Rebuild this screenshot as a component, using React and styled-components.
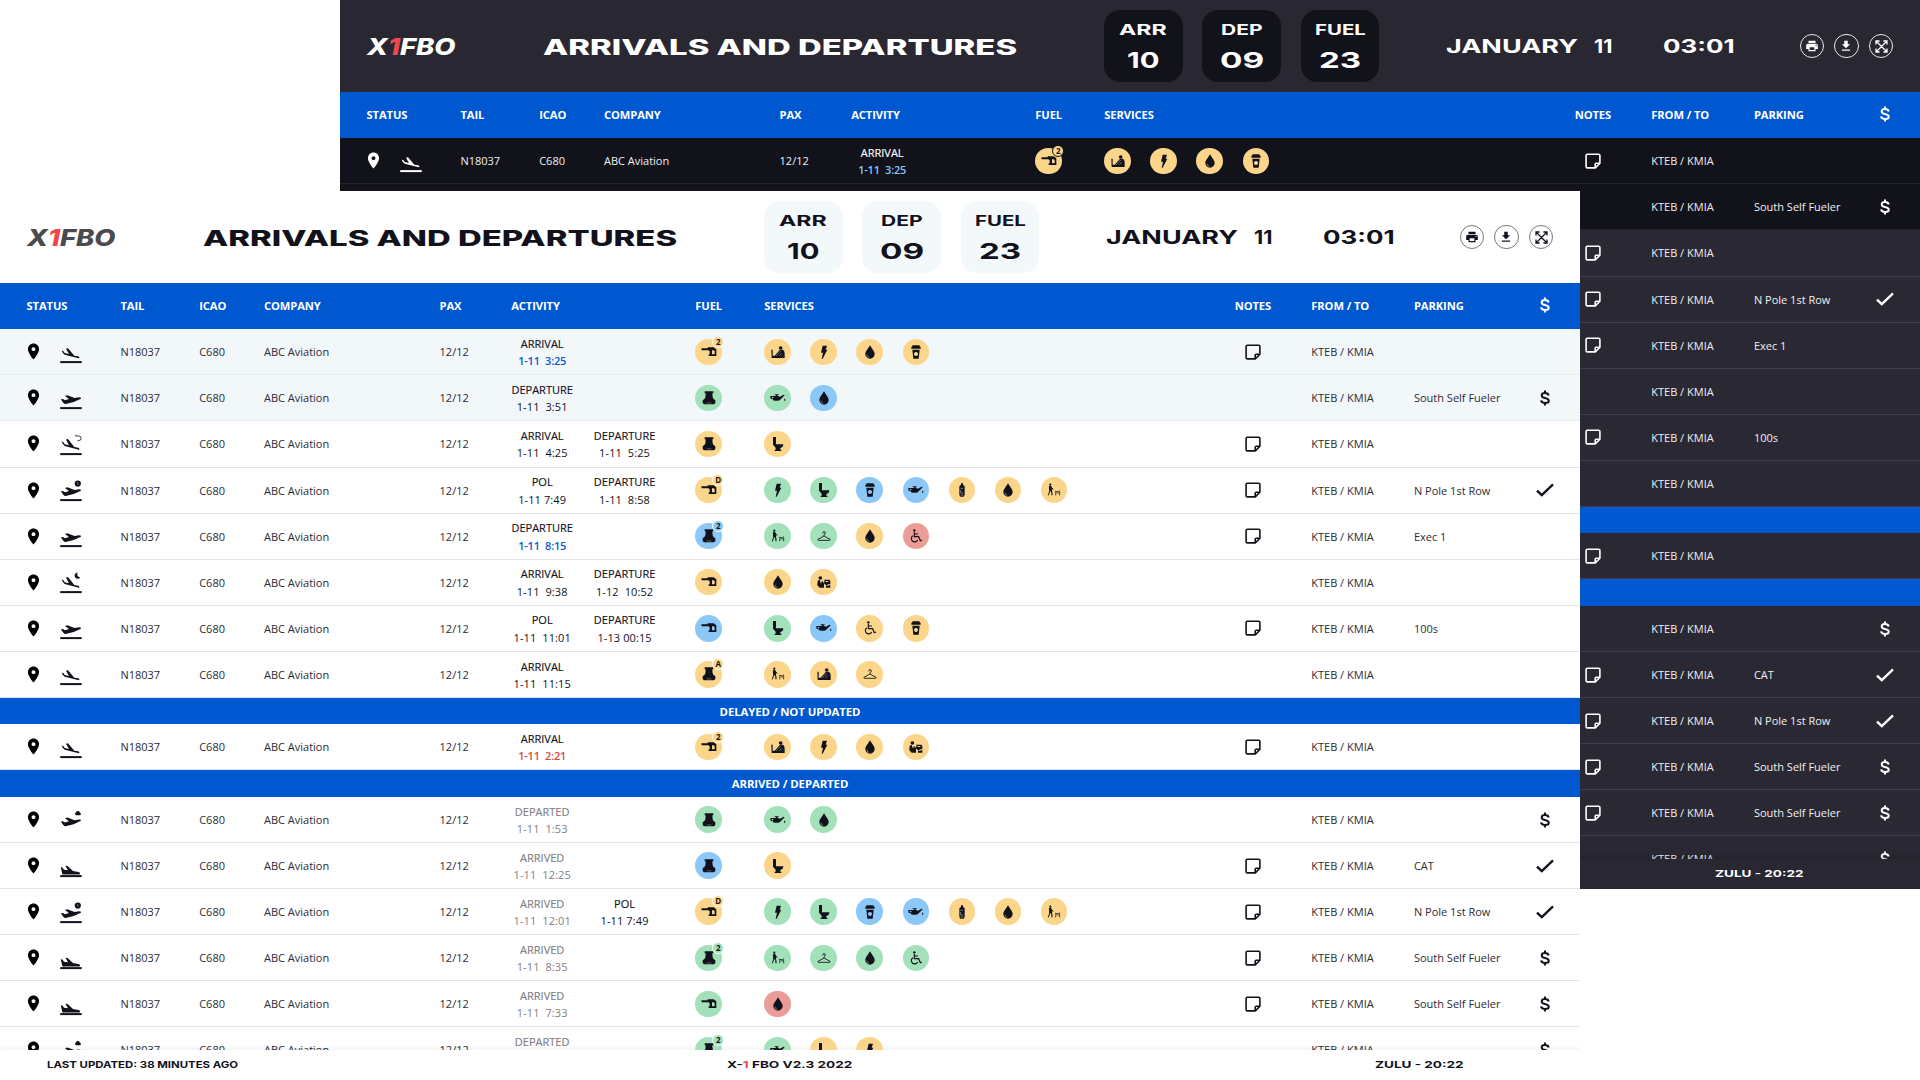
import React, { useLayoutEffect, useRef, useState } from "react";
import styled, { createGlobalStyle, ThemeProvider } from "styled-components";
import { MdLocationOn, MdPrint, MdDownload } from "react-icons/md";

const Global = createGlobalStyle`
  * { box-sizing: border-box; }
  body { margin: 0; background: #fff; overflow: hidden; font-family: "Open Sans", "Noto Sans", sans-serif; }
`;

const light = {
  panel: "#ffffff", header: "#ffffff", text: "#12121c", cell: "#2b2b35", pin: "#000000", logo: "#4b4b4d", card: "#f3f8fb",
  active: "#f2f7fa", line: "#e2e4e7", activeLine: "#e8edf0", ring: "#77777b", accent: "#0b5bd3",
  muted: "#808084", late: "#dd4a3d", shadow: "rgba(20,20,40,.06)",
};
const dark = {
  panel: "#292833", header: "#292731", text: "#ffffff", cell: "#f0f0f2", pin: "#ffffff", logo: "#ffffff", card: "#12121b",
  active: "#12121b", line: "#3e3d50", activeLine: "#242430", ring: "#e8e8ea", accent: "#86c5f7",
  muted: "#9a9aa2", late: "#ee6a60", shadow: "rgba(0,0,0,.18)",
};
const BLUE = "#0058d1";
const TONES = { y: "#fbd68a", g: "#a2e1b9", b: "#8cc8f7", r: "#ec9c96" };
const COLUMNS =
  "93.9px 78.8px 64.8px 175.6px 71.6px 184.1px 69px 470.4px 76.6px 102.7px 121.4px 20px";

const Desktop = styled.main`
  position: relative;
  width: 1920px;
  height: 1080px;
  overflow: hidden;
  background: #fff;
`;
const Window = styled.section`
  position: absolute;
  left: ${(p) => p.$x}px;
  top: ${(p) => p.$y}px;
  width: 1580px;
  height: 889px;
  display: flex;
  flex-direction: column;
  overflow: hidden;
  background: ${(p) => p.theme.panel};
  color: ${(p) => p.theme.text};
`;
const Header = styled.header`
  flex: none;
  height: 92.2px;
  padding-left: 26.5px;
  display: grid;
  grid-template-columns: 176px 561px 342px 217px 137px auto;
  align-items: center;
  background: ${(p) => p.theme.header};
`;
const Cards = styled.div`
  display: flex;
  gap: 19.8px;
  padding-left: 0.5px;
`;
const Card = styled.div`
  width: 78.6px;
  height: 72px;
  padding-top: 11px;
  border-radius: 16px;
  display: flex;
  flex-direction: column;
  align-items: center;
  gap: 12px;
  background: ${(p) => p.theme.card};
`;
const CardLine = styled.div`
  height: 18px;
  display: flex;
  align-items: center;
  line-height: 1;
`;
const Lowered = styled.div`
  padding-top: 3px;
  display: flex;
  gap: 16px;
`;
const Buttons = styled.div`
  display: flex;
  gap: 9.8px;
`;
const RoundButton = styled.button`
  width: 24.8px;
  height: 24.8px;
  padding: 0;
  border-radius: 50%;
  border: 1.4px solid ${(p) => p.theme.ring};
  background: transparent;
  color: ${(p) => p.theme.text};
  display: grid;
  place-items: center;
`;
const FitBox = styled.span`
  display: inline-block;
  white-space: pre;
  line-height: 1.2;
  font-family: Inter, sans-serif;
  font-weight: ${(p) => p.$weight};
  font-size: ${(p) => p.$size}px;
  font-style: ${(p) => (p.$italic ? "italic" : "normal")};
  width: ${(p) => p.$w}px;
`;
const FitText = styled.span`
  display: inline-block;
  transform-origin: left center;
`;
const Logo = styled.div`
  color: ${(p) => p.theme.logo};
`;
const Red = styled.span`
  color: #f0484c;
`;

const HeadRow = styled.div`
  flex: none;
  height: 46.1px;
  padding: 0 0 1.5px 26.5px;
  display: grid;
  grid-template-columns: ${COLUMNS};
  align-items: center;
  background: ${BLUE};
  color: #fff;
  font-size: 11.2px;
  font-weight: 700;
  letter-spacing: -0.1px;
  white-space: nowrap;
`;
const Row = styled.div`
  flex: none;
  height: 46.08px;
  padding-left: 26.5px;
  display: grid;
  grid-template-columns: ${COLUMNS};
  align-items: center;
  font-size: 11px;
  white-space: nowrap;
  background: ${(p) => (p.$active ? p.theme.active : p.theme.panel)};
  border-bottom: 1px solid ${(p) => (p.$active ? p.theme.activeLine : p.theme.line)};
`;
const Cell = styled.span`
  color: ${(p) => p.theme.cell};
`;
const Band = styled.div`
  flex: none;
  height: 26.5px;
  display: flex;
  align-items: center;
  justify-content: center;
  background: ${BLUE};
  color: #fff;
  font-size: 11.4px;
  font-weight: 700;
  letter-spacing: -0.1px;
`;
const Body = styled.div`
  flex: 1;
  min-height: 0;
  overflow: hidden;
  display: flex;
  flex-direction: column;
`;
const Status = styled.div`
  display: flex;
  align-items: center;
  gap: 15.5px;
  svg { display: block; flex: none; }
`;
const Pin = styled(MdLocationOn)`
  color: ${(p) => p.theme.pin};
  width: 19px;
  height: 19px;
  margin-left: -2.5px;
`;
const Activity = styled.div`
  display: flex;
  gap: 20.4px;
`;
const Leg = styled.div`
  width: 62px;
  padding-top: 1px;
  display: flex;
  flex-direction: column;
  align-items: center;
  line-height: 17.3px;
  color: ${(p) => (p.$tone === "muted" ? p.theme.muted : p.theme.text)};
`;
const LegName = styled.span`
  font-weight: 500;
  -webkit-text-stroke: 0.15px currentColor;
`;
const LegTime = styled.span`
  white-space: pre;
  color: ${(p) => (p.$tone ? p.theme[p.$tone] : "inherit")};
  font-weight: ${(p) => (p.$tone === "accent" || p.$tone === "late" ? 600 : 400)};
  letter-spacing: ${(p) => (p.$tone === "accent" || p.$tone === "late" ? "-0.2px" : "0.1px")};
`;
const Services = styled.div`
  display: flex;
  gap: 19.6px;
`;
const Disc = styled.span`
  position: relative;
  width: 26.5px;
  height: 26.5px;
  border-radius: 50%;
  display: grid;
  place-items: center;
  color: #12121c;
  background: ${(p) => TONES[p.$tone]};
`;
const Badge = styled.span`
  position: absolute;
  right: -2.5px;
  top: -3px;
  width: 12px;
  height: 12px;
  border-radius: 50%;
  border: 1.2px solid ${(p) => (p.$active ? p.theme.active : p.theme.panel)};
  background: ${(p) => TONES[p.$tone]};
  display: grid;
  place-items: center;
  font-size: 8px;
  line-height: 1;
  font-weight: 700;
`;
const Centered = styled.div`
  display: flex;
  justify-content: center;
  svg { flex: none; }
`;
const NoteCell = styled.div`
  width: 37.6px;
  display: flex;
  justify-content: center;
`;
const Footer = styled.footer`
  flex: none;
  height: 30px;
  padding-left: 47px;
  display: grid;
  grid-template-columns: 680.3px 648.1px auto;
  align-items: center;
  background: ${(p) => p.theme.header};
  box-shadow: 0 -2px 5px ${(p) => p.theme.shadow};
`;

/* Stretches a line of display type to a given width. */
function Fit({ w, size, weight = 700, italic, children }) {
  const ref = useRef(null);
  const [scale, setScale] = useState(1);
  useLayoutEffect(() => {
    setScale(w / ref.current.offsetWidth);
  }, [w]);
  return (
    <FitBox $w={w} $size={size} $weight={weight} $italic={italic}>
      <FitText ref={ref} style={{ transform: `scaleX(${scale})` }}>{children}</FitText>
    </FitBox>
  );
}

const GLYPHS = {
  nozzle: <path fillRule="evenodd" d="M-23-11h19v-3h18l8 6v20h-23v-5h3v-9l-4-3h-20zM9-5v12h8v-10l-3-2z" />,
  truck: <><path d="M-13-20h26v6h-3q0 12 3 16l6 5v8l-4 4h-30l-4-4v-8l6-5q3-4 3-16h-3z" /><path d="M-7 14h14v1.6h-14z" opacity=".6" fill="#fff" /></>,
  desk: <><circle cx="8" cy="-12" r="5.5" /><path d="M-20-7h4v18h6l16-18h9q5 3 5 12v13h-39z" /><path d="M-6 12l14-15M4 12l6-8" stroke="#fff" strokeOpacity=".55" strokeWidth="2" /></>,
  bolt: <path d="M-4-19h13l-4 12h5l-14 27h-3l4-18h-6z" />,
  drop: <><path d="M0-20c6 11 14 18 14 26a14 14 0 0 1-28 0c0-8 8-15 14-26z" /><path d="M-9 8a8 8 0 0 0 7 8" fill="none" stroke="#fff" strokeOpacity=".6" strokeWidth="2" /></>,
  cup: <path fillRule="evenodd" d="M-10-20h20l2 4h2v6h-28v-6h2zM-11-7h22l-3 27h-16zM0 0a6 6 0 1 0 .1 0z" />,
  oil: <path fillRule="evenodd" d="M-23-6h11l6-1v-2h-4v-2h12v2h-3v2l7 3 11-6 3 2-12 12q-2 4-8 4h-10q-5 0-7-5h-4q-3-2-2-9zM-19-3l1 4h4v-4zM20 1q4 6 1 8-5 0-1-8z" />,
  toilet: <path d="M-15-21h9v22h22q0 9-9 11v5h3v4h-20v-4h3v-6l-8-9z" />,
  bottle: <><path d="M-3-20h6v4l5 5v26l-3 5h-10l-3-5v-26l5-5z" /><path d="M-5-5h8M-4 0v9h8M-4 15h8" stroke="#fff" strokeOpacity=".65" fill="none" strokeWidth="2" /></>,
  dog: <><circle cx="-11" cy="-16" r="3.2" /><path d="M-14-11h5l2 8v6l-6-1zM-9-8l7 6M-12 1l-5 15M-9 1l3 6v9" stroke="currentColor" strokeWidth="3" /><path d="M3 3l3 2h8l4-3M6 5l-1 11M12 6v5M17 5v11" stroke="currentColor" strokeWidth="2.4" fill="none" /></>,
  hanger: <path d="M-4-8q0-5 4-5t4 4q0 3-4 5v4l18 10q2 3-2 3h-32q-4 0-2-3l18-10" fill="none" stroke="currentColor" strokeWidth="2.6" />,
  wheel: <><circle cx="-5" cy="-17" r="3.6" /><path d="M-5-13v15h13l5 12 5-2M-5-6h11M-9-1a10 10 0 1 0 14 13" fill="none" stroke="currentColor" strokeWidth="3.4" /></>,
  bags: <><circle cx="-11" cy="-12" r="5.5" /><path d="M-19-4q3-2 6-2l4 11 3-9 6 8v13h-13l-7-7z" /><path fillRule="evenodd" d="M-1-7h17l3 4v10h-7l-4 4-7-6-2-5 4-3zM5-3v3h8v-3zM6 12l5-1 8-2v8h-13z" /></>,
};

const Glyph = ({ name }) => (
  <svg width="16" height="16" viewBox="-24 -24 48 48" fill="currentColor">{GLYPHS[name]}</svg>
);

const LAND = "M8 47l5 1 4 6 13 3-9-16 6-1 19 22 12 2q6 3 2 6l-3-1-40-10q-5-2-9-12z";
const RISE = "M6 55l6-1 6 4 12-4-12-9 7-2 22 8 13-2q7 0 6 4l-22 10-24 6q-6 1-14-14z";

function Plane({ kind, mark }) {
  return (
    <svg width="24" height="34" viewBox="0 0 24 34" fill="currentColor">
      {kind === "land" && <path d={LAND} transform={mark ? "translate(0 -2.3) scale(.333 .36)" : "scale(.333)"} />}
      {kind === "rise" && <path d={RISE} transform="scale(.333)" />}
      {kind === "gone" && <path d={RISE} transform="translate(0 .2) scale(.333)" />}
      {kind === "down" && <path d="M1.8 18.2l1.6.4 1.6 2.2 4 .5-2.6-4.6 2.2.2 5.4 5.2 5.4.9c1.9.4 2.3 2 .9 2.4H3.4z" />}
      {kind !== "gone" && <path d="M1.2 26.1h21.5v2H1.2z" />}
      {mark === "back" && <path d="M16.6 9h3.2a2.2 2.2 0 0 1 0 4.6h-1.4M17.4 7.8l-1 1.2" fill="none" stroke="currentColor" strokeWidth=".8" />}
      {mark === "clock" && <><circle cx="18.8" cy="10.6" r="3.1" /><path d="M18.6 8.9v2l1.2.7" stroke="#888" strokeWidth=".7" fill="none" /></>}
      {mark === "moon" && <path d="M18.6 7.4a3.2 3.2 0 1 0 2.7 5.2 3.6 3.6 0 0 1-2.7-5.2z" />}
      {mark === "cloud" && <path d="M17 12.2a1.5 1.5 0 0 1 0-2.8 2 2 0 0 1 3.8 0 1.5 1.5 0 0 1 .2 2.8z" />}
    </svg>
  );
}

const Note = () => (
  <svg width="16" height="16" viewBox="0 0 16 16" fill="none" stroke="currentColor" strokeWidth="1.6" strokeLinejoin="round">
    <path d="M2.3 1.2h11.4a1.2 1.2 0 0 1 1.2 1.2v7.8l-4.6 4.7h-8a1.2 1.2 0 0 1-1.2-1.2V2.4a1.2 1.2 0 0 1 1.2-1.2z" />
    <path d="M10.2 14.6v-3.4a1 1 0 0 1 1-1h3.4" />
  </svg>
);
const Expand = () => (
  <svg width="13" height="13" viewBox="0 0 13 13" fill="none" stroke="currentColor" strokeWidth="1.3">
    <path d="M1 4.6V1h3.6M8.4 1H12v3.6M12 8.4V12H8.4M4.6 12H1V8.4M1 1l11 11M12 1L1 12" />
  </svg>
);
const Money = () => (
  <svg width="12" height="16" viewBox="0 0 12 16" fill="none" stroke="currentColor" strokeWidth="2">
    <path d="M6 .6v2.6M6 12.8v2.6M9.7 5.4C9.3 3.8 8 3 6 3 4 3 2.7 3.9 2.7 5.4c0 1.4 1 2 3.3 2.6 2.6.6 3.8 1.3 3.8 2.8S8.300 13 6 13c-2.300 0-3.700-.9-3.900-2.600" />
  </svg>
);
const Tick = () => (
  <svg width="18" height="14" viewBox="0 0 18 14" fill="none" stroke="currentColor" strokeWidth="2.400">
    <path d="M1 7.600l4.800 4.600L17 1.400" />
  </svg>
);

const POL_SERVICES = "bolt-g toilet-g cup-b oil-b bottle-y drop-y dog-y";
const SCHEDULE = [
  { on: 1, plane: "land", legs: [["ARRIVAL", "1-11  3:25", "accent"]], fuel: "nozzle-y-2", svc: "desk-y bolt-y drop-y cup-y", note: 1 },
  { on: 1, plane: "rise", legs: [["DEPARTURE", "1-11  3:51"]], fuel: "truck-g", svc: "oil-g drop-b", park: "South Self Fueler", pay: "$" },
  { plane: "land", mark: "back", legs: [["ARRIVAL", "1-11  4:25"], ["DEPARTURE", "1-11  5:25"]], fuel: "truck-y", svc: "toilet-y", note: 1 },
  { plane: "rise", mark: "clock", legs: [["POL", "1-11 7:49"], ["DEPARTURE", "1-11  8:58"]], fuel: "nozzle-y-D", svc: POL_SERVICES, note: 1, park: "N Pole 1st Row", pay: "ok" },
  { plane: "rise", legs: [["DEPARTURE", "1-11  8:15", "accent"]], fuel: "truck-b-2", svc: "dog-g hanger-g drop-y wheel-r", note: 1, park: "Exec 1" },
  { plane: "land", mark: "moon", legs: [["ARRIVAL", "1-11  9:38"], ["DEPARTURE", "1-12  10:52"]], fuel: "nozzle-y", svc: "drop-y bags-y" },
  { plane: "rise", legs: [["POL", "1-11  11:01"], ["DEPARTURE", "1-13 00:15"]], fuel: "nozzle-b", svc: "toilet-g oil-b wheel-y cup-y", note: 1, park: "100s" },
  { plane: "land", legs: [["ARRIVAL", "1-11  11:15"]], fuel: "truck-y-A", svc: "dog-y desk-y hanger-y" },
  { band: "DELAYED / NOT UPDATED" },
  { plane: "land", legs: [["ARRIVAL", "1-11  2:21", "late"]], fuel: "nozzle-y-2", svc: "desk-y bolt-y drop-y bags-y", note: 1 },
  { band: "ARRIVED / DEPARTED" },
  { plane: "gone", mark: "cloud", legs: [["DEPARTED", "1-11  1:53", "muted"]], fuel: "truck-g", svc: "oil-g drop-g", pay: "$" },
  { plane: "down", legs: [["ARRIVED", "1-11  12:25", "muted"]], fuel: "truck-b", svc: "toilet-y", note: 1, park: "CAT", pay: "ok" },
  { plane: "rise", mark: "clock", legs: [["ARRIVED", "1-11  12:01", "muted"], ["POL", "1-11 7:49"]], fuel: "nozzle-y-D", svc: POL_SERVICES, note: 1, park: "N Pole 1st Row", pay: "ok" },
  { plane: "down", legs: [["ARRIVED", "1-11  8:35", "muted"]], fuel: "truck-g-2", svc: "dog-g hanger-g drop-g wheel-g", note: 1, park: "South Self Fueler", pay: "$" },
  { plane: "down", legs: [["ARRIVED", "1-11  7:33", "muted"]], fuel: "nozzle-g", svc: "drop-r", note: 1, park: "South Self Fueler", pay: "$" },
  { plane: "gone", mark: "cloud", legs: [["DEPARTED", " ", "muted"]], fuel: "truck-g-2", svc: "oil-g toilet-y bolt-y", pay: "$" },
];

function ServiceDisc({ code, active }) {
  const [name, tone, badge] = code.split("-");
  return (
    <Disc $tone={tone}>
      <Glyph name={name} />
      {badge && <Badge $tone={tone} $active={active}>{badge}</Badge>}
    </Disc>
  );
}

function Flight({ f }) {
  return (
    <Row $active={f.on}>
      <Status><Pin /><Plane kind={f.plane} mark={f.mark} /></Status>
      <Cell>N18037</Cell>
      <Cell>C680</Cell>
      <Cell>ABC Aviation</Cell>
      <Cell>12/12</Cell>
      <Activity>
        {f.legs.map(([name, time, tone]) => (
          <Leg key={name} $tone={tone}>
            <LegName>{name}</LegName>
            <LegTime $tone={tone}>{time}</LegTime>
          </Leg>
        ))}
      </Activity>
      <ServiceDisc code={f.fuel} active={f.on} />
      <Services>{f.svc.split(" ").map((s) => <ServiceDisc key={s} code={s} active={f.on} />)}</Services>
      <NoteCell>{f.note && <Note />}</NoteCell>
      <Cell>KTEB / KMIA</Cell>
      <Cell>{f.park}</Cell>
      <Centered>{f.pay === "$" && <Money />}{f.pay === "ok" && <Tick />}</Centered>
    </Row>
  );
}

const COUNTS = [["ARR", 48, "10", 32], ["DEP", 42, "09", 44], ["FUEL", 51, "23", 42]];

function Board({ theme, x, y }) {
  return (
    <ThemeProvider theme={theme}>
      <Window $x={x} $y={y}>
        <Header>
          <Logo><Fit w={89} size={22.500} weight={800} italic>X<Red>1</Red>FBO</Fit></Logo>
          <Lowered><Fit w={474} size={21.5} weight={800}>ARRIVALS AND DEPARTURES</Fit></Lowered>
          <Cards>
            {COUNTS.map(([label, lw, value, vw]) => (
              <Card key={label}>
                <CardLine><Fit w={lw} size={14}>{label}</Fit></CardLine>
                <CardLine><Fit w={vw} size={22}>{value}</Fit></CardLine>
              </Card>
            ))}
          </Cards>
          <Lowered><Fit w={132} size={19}>JANUARY</Fit><Fit w={18} size={19}>11</Fit></Lowered>
          <Lowered><Fit w={71} size={19}>03:01</Fit></Lowered>
          <Buttons>
            <RoundButton><MdPrint size={14} /></RoundButton>
            <RoundButton><MdDownload size={14} /></RoundButton>
            <RoundButton><Expand /></RoundButton>
          </Buttons>
        </Header>
        <HeadRow>
          <span>STATUS</span><span>TAIL</span><span>ICAO</span><span>COMPANY</span><span>PAX</span>
          <span>ACTIVITY</span><span>FUEL</span><span>SERVICES</span><span>NOTES</span>
          <span>FROM / TO</span><span>PARKING</span><Centered><Money /></Centered>
        </HeadRow>
        <Body>
          {SCHEDULE.map((f, i) => (f.band ? <Band key={i}>{f.band}</Band> : <Flight key={i} f={f} />))}
        </Body>
        <Footer>
          <Fit w={191} size={9.2}>LAST UPDATED: 38 MINUTES AGO</Fit>
          <Fit w={126} size={9.600}>X-<Red>1</Red> FBO V2.3 2022</Fit>
          <Fit w={89} size={9.600}>ZULU - 20:22</Fit>
        </Footer>
      </Window>
    </ThemeProvider>
  );
}

export default function App() {
  return (
    <Desktop>
      <Global />
      <Board theme={dark} x={340} y={0} />
      <Board theme={light} x={0} y={191} />
    </Desktop>
  );
}
